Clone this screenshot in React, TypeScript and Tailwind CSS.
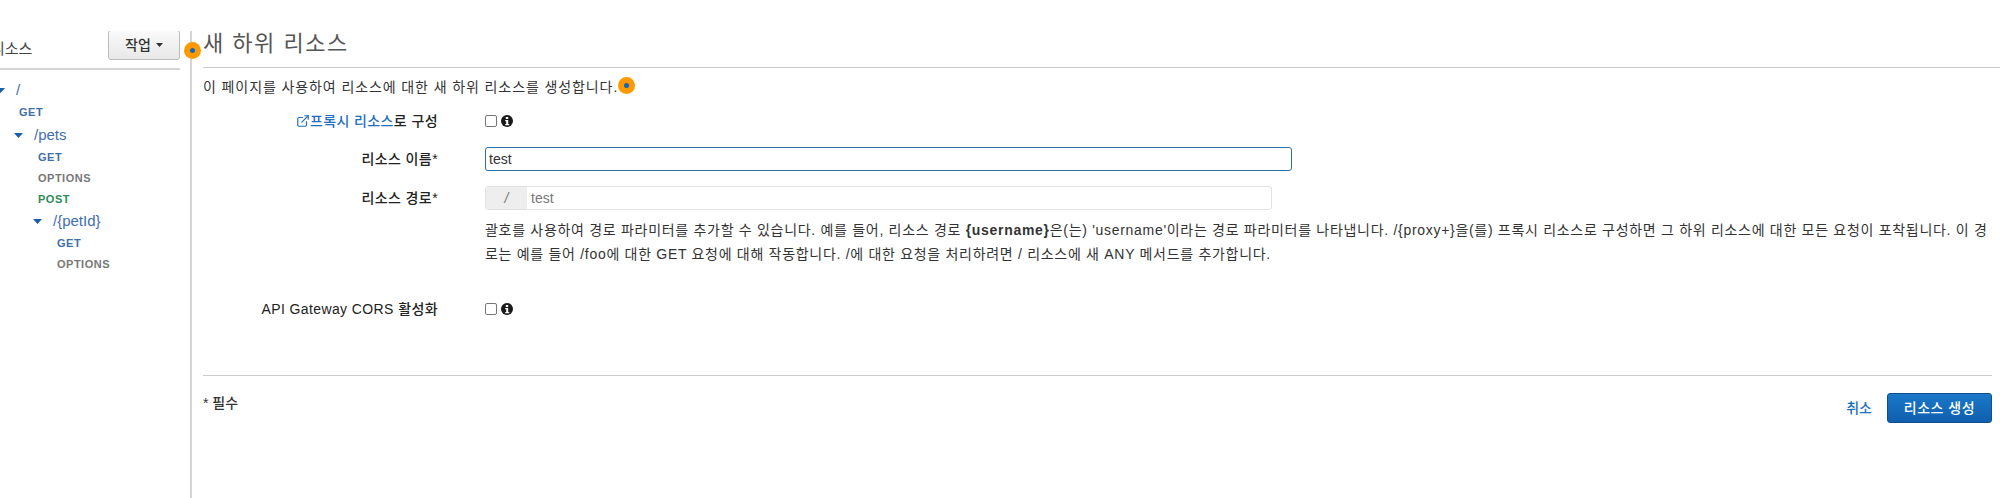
import { ExternalLink } from "lucide-react";

const Caret = ({ className = "" }: { className?: string }) => (
  <svg width="9" height="5" viewBox="0 0 9 5" className={className}>
    <path d="M0 0h9L4.5 5z" fill="#1a5fa8" />
  </svg>
);

const Info = () => (
  <svg width="12" height="12" viewBox="0 0 12 12" className="shrink-0">
    <circle cx="6" cy="6" r="6" fill="#1a1a1a" />
    <rect x="4.8" y="2" width="2.4" height="2" fill="#fff" />
    <path d="M4.2 5h3v4h1v1.2H4.2V9h1V6.2h-1z" fill="#fff" />
  </svg>
);

const Dot = ({ className }: { className: string }) => (
  <div className={`absolute w-[17px] h-[17px] rounded-full bg-[#f90] flex items-center justify-center ${className}`}>
    <div className="w-[5px] h-[5px] rounded-full bg-[#1166bb]" />
  </div>
);

const Method = ({ name, color, left }: { name: string; color: string; left: string }) => (
  <div className={`h-[21px] flex items-center text-[11px] font-bold tracking-[0.5px] ${color} ${left}`}>{name}</div>
);

const Path = ({ name, left }: { name: string; left: string }) => (
  <div className={`h-[24px] flex items-center gap-[11px] text-[15px] text-[#3f6fb0] ${left}`}>
    <Caret />
    <span>{name}</span>
  </div>
);

const Row = ({ label, children, className = "" }: { label: React.ReactNode; children: React.ReactNode; className?: string }) => (
  <div className={`flex items-center ${className}`}>
    <div className="w-[235px] text-right text-[14px] font-medium tracking-[0.4px] text-[#222]">{label}</div>
    <div className="ml-[47px] flex-1 flex items-center">{children}</div>
  </div>
);

const Check = () => (
  <div className="w-[12px] h-[12px] rounded-[2px] border border-[#767676] bg-white mr-[4px]" />
);

export default function App() {
  return (
    <div className="relative h-[498px] overflow-hidden bg-white pt-[31px] flex font-['Liberation_Sans','Noto_Sans_CJK_KR',sans-serif]">
      <aside className="w-[192px] shrink-0 border-r-2 border-[#d5d5d5] pr-[10px] overflow-hidden">
        <div className="flex items-center justify-between h-[39px] border-b-2 border-[#d5d5d5] pb-[9px]">
          <span className="-ml-[9px] mt-[8px] text-[15px] text-[#444]">리소스</span>
          <button className="w-[72px] h-[30px] flex items-center justify-center gap-[5px] rounded-[3px] border border-[#bbb] bg-gradient-to-b from-[#fafafa] to-[#e8e8e8] text-[14px] font-medium text-[#333]">
            작업
            <svg width="7" height="4" viewBox="0 0 7 4"><path d="M0 0h7L3.5 4z" fill="#333" /></svg>
          </button>
        </div>
        <div className="pt-[8px]">
          <Path name="/" left="-ml-[4px]" />
          <Method name="GET" color="text-[#3f6fa8]" left="ml-[19px]" />
          <Path name="/pets" left="ml-[14px]" />
          <Method name="GET" color="text-[#3f6fa8]" left="ml-[38px]" />
          <Method name="OPTIONS" color="text-[#777]" left="ml-[38px]" />
          <Method name="POST" color="text-[#2e8b57]" left="ml-[38px]" />
          <Path name="/{petId}" left="ml-[33px] -mt-[1px]" />
          <Method name="GET" color="text-[#3f6fa8]" left="ml-[57px]" />
          <Method name="OPTIONS" color="text-[#777]" left="ml-[57px]" />
        </div>
      </aside>
      <main className="flex-1 pl-[11px]">
        <h1 className="h-[36px] text-[22px] leading-[26px] tracking-[1.5px] text-[#555] font-normal">새 하위 리소스</h1>
        <div className="border-t border-[#ccc]" />
        <p className="mt-[10px] h-[18px] text-[14px] leading-[18px] tracking-[0.9px] text-[#333]">이 페이지를 사용하여 리소스에 대한 새 하위 리소스를 생성합니다.</p>
        <Row label={<span><ExternalLink size={14} className="inline text-[#1f6fbf] mb-[1px]" /><span className="text-[#1f6fbf]">프록시 리소스</span>로 구성</span>} className="mt-[14px] h-[22px]">
          <Check />
          <Info />
        </Row>
        <Row label="리소스 이름*" className="mt-[15px] h-[24px]">
          <input
            readOnly
            value="test"
            className="w-[807px] h-[24px] rounded-[3px] border border-[#2e6da8] px-[3px] text-[14px] text-[#333] outline-none"
          />
        </Row>
        <Row label="리소스 경로*" className="mt-[15px] h-[24px]">
          <div className="w-[787px] h-[24px] flex rounded-[3px] border border-[#e2e2e2] text-[14px] text-[#777]">
            <div className="w-[41px] bg-[#eee] flex items-center justify-center italic">/</div>
            <div className="flex-1 flex items-center px-[4px]">test</div>
          </div>
        </Row>
        <p className="ml-[282px] mt-[8px] text-[14px] leading-[24px] tracking-[0.7px] text-[#333] whitespace-nowrap">
          괄호를 사용하여 경로 파라미터를 추가할 수 있습니다. 예를 들어, 리소스 경로 <b>{"{username}"}</b>은(는) 'username'이라는 경로 파라미터를 나타냅니다. /{"{proxy+}"}을(를) 프록시 리소스로 구성하면 그 하위 리소스에 대한 모든 요청이 포착됩니다. 이 경
          <br />
          로는 예를 들어 /foo에 대한 GET 요청에 대해 작동합니다. /에 대한 요청을 처리하려면 / 리소스에 새 ANY 메서드를 추가합니다.
        </p>
        <Row label="API Gateway CORS 활성화" className="mt-[32px] h-[22px]">
          <Check />
          <Info />
        </Row>
        <div className="mr-[8px] mt-[55px] border-t border-[#ccc]" />
        <div className="mr-[8px] mt-[17px] flex items-start justify-between">
          <span className="text-[14px] font-medium text-[#333]">* 필수</span>
          <div className="flex items-center gap-[15px]">
            <a className="text-[14px] font-medium text-[#1f6fbf]">취소</a>
            <button className="w-[105px] h-[30px] rounded-[3px] border border-[#0f4f8f] bg-gradient-to-b from-[#1a78c8] to-[#0f5fae] text-[14px] font-medium tracking-[0.5px] text-white">리소스 생성</button>
          </div>
        </div>
      </main>
      <Dot className="left-[184px] top-[42px]" />
      <Dot className="left-[618px] top-[77px]" />
    </div>
  );
}
